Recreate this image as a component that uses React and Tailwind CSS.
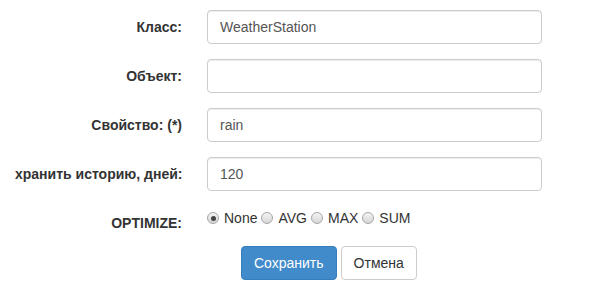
import React from "react";

const font = { fontFamily: '"Liberation Sans", Arial, sans-serif' };

function Row({ label, value }) {
  return (
    <div className="flex items-center h-[34px] mb-[15px]">
      <label className="w-[182px] pl-[15px] text-right font-bold text-[14px] text-[#333] leading-[20px] whitespace-nowrap">
        {label}
      </label>
      <div className="ml-[25px] w-[335px] h-[34px] border border-[#ccc] rounded-[4px] bg-white px-[12px] flex items-center text-[14px] text-[#555] shadow-[inset_0_1px_1px_rgba(0,0,0,0.075)]">
        {value}
      </div>
    </div>
  );
}

function Radio({ checked, text }) {
  return (
    <span className="inline-flex items-center">
      <span className="w-[12px] h-[12px] rounded-full border border-[#a6a6a6] bg-gradient-to-b from-[#f4f4f4] to-[#d6d6d6] flex items-center justify-center mr-[5px]">
        {checked && <span className="w-[5px] h-[5px] rounded-full bg-[#444]" />}
      </span>
      <span className="mr-[4px]">{text}</span>
    </span>
  );
}

export default function App() {
  return (
    <div className="w-[613px] h-[298px] bg-white pt-[10px]" style={font}>
      <Row label="Класс:" value="WeatherStation" />
      <Row label="Объект:" value="" />
      <Row label="Свойство: (*)" value="rain" />
      <Row label="хранить историю, дней:" value="120" />
      <div className="flex items-start h-[20px]">
        <label className="w-[182px] pl-[15px] pt-[7px] text-right font-bold text-[14px] text-[#333] leading-[20px] whitespace-nowrap">
          OPTIMIZE:
        </label>
        <div className="ml-[25px] flex items-center text-[14px] text-[#333] leading-[20px] pt-[2px]">
          <Radio checked text="None" />
          <Radio text="AVG" />
          <Radio text="MAX" />
          <Radio text="SUM" />
        </div>
      </div>
      <div className="flex mt-[20px] pl-[241px] gap-[4px]">
        <button className="h-[34px] px-[12px] rounded-[4px] bg-[#428bca] border border-[#357ebd] text-white text-[14px]">
          Сохранить
        </button>
        <button className="h-[34px] px-[12px] rounded-[4px] bg-white border border-[#ccc] text-[#333] text-[14px]">
          Отмена
        </button>
      </div>
    </div>
  );
}
